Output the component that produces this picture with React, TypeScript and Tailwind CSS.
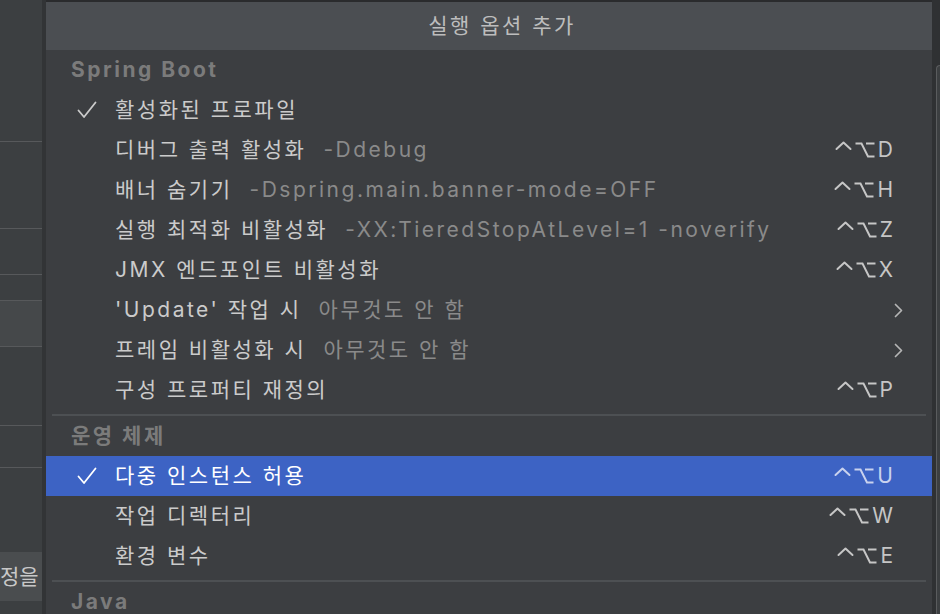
import React from "react";

type Item = {
  label: string;
  hint?: string;
  shortcut?: string;
  checked?: boolean;
  submenu?: boolean;
  selected?: boolean;
};

const springItems: Item[] = [
  { label: "활성화된 프로파일", checked: true },
  { label: "디버그 출력 활성화", hint: "-Ddebug", shortcut: "D" },
  { label: "배너 숨기기", hint: "-Dspring.main.banner-mode=OFF", shortcut: "H" },
  { label: "실행 최적화 비활성화", hint: "-XX:TieredStopAtLevel=1 -noverify", shortcut: "Z" },
  { label: "JMX 엔드포인트 비활성화", shortcut: "X" },
  { label: "'Update' 작업 시", hint: "아무것도 안 함", submenu: true },
  { label: "프레임 비활성화 시", hint: "아무것도 안 함", submenu: true },
  { label: "구성 프로퍼티 재정의", shortcut: "P" },
];

const osItems: Item[] = [
  { label: "다중 인스턴스 허용", checked: true, selected: true, shortcut: "U" },
  { label: "작업 디렉터리", shortcut: "W" },
  { label: "환경 변수", shortcut: "E" },
];

const Check = () => (
  <svg width="20" height="18" viewBox="0 0 20 18" fill="none">
    <path d="M1.5 9.5 L7 16 L18.5 1.5" stroke="currentColor" strokeWidth="1.8" strokeLinecap="round" strokeLinejoin="round" />
  </svg>
);

const Chevron = () => (
  <svg width="9" height="15" viewBox="0 0 9 15" fill="none">
    <path d="M1.5 1.5 L7.5 7.5 L1.5 13.5" stroke="currentColor" strokeWidth="1.7" strokeLinecap="round" strokeLinejoin="round" />
  </svg>
);

// control key caret, drawn larger than the font glyph
const Caret = () => (
  <svg width="17" height="20" viewBox="0 0 17 20" fill="none" className="mr-[3px]">
    <path d="M1.5 9 L8.5 2.5 L15.5 9" stroke="currentColor" strokeWidth="2" strokeLinecap="round" strokeLinejoin="round" />
  </svg>
);

// option key
const Option = () => (
  <svg width="20" height="20" viewBox="0 0 20 20" fill="none" className="mr-[3px]">
    <path d="M1.5 3.5 H6.5 L13 16.5 H18.5 M12 3.5 H18.5" stroke="currentColor" strokeWidth="2" strokeLinecap="square" />
  </svg>
);

function Row({ item }: { item: Item }) {
  return (
    <div
      className={`flex shrink-0 items-center h-[40px] ${
        item.selected ? "bg-[#3d63c4] text-white" : "text-[#cbcbcb]"
      }`}
    >
      <div className="w-[69px] flex justify-end pr-[18px]">
        {item.checked && <Check />}
      </div>
      <span className="whitespace-nowrap">{item.label}</span>
      {item.hint && (
        <span className="ml-[17px] whitespace-nowrap text-[#8a8a8a]">{item.hint}</span>
      )}
      <div className="ml-auto flex items-center">
        {item.shortcut && (
          <span
            className={`mr-[39px] flex items-center whitespace-nowrap tracking-normal ${
              item.selected ? "text-[#c9d2ee]" : "text-[#c6c6c6]"
            }`}
          >
            <Caret />
            <Option />
            {item.shortcut}
          </span>
        )}
        {item.submenu && (
          <span className="mr-[29px] text-[#b5b5b5]">
            <Chevron />
          </span>
        )}
      </div>
    </div>
  );
}

function SectionTitle({ title, h }: { title: string; h: string }) {
  return (
    <div className={`flex shrink-0 items-center pl-[25px] font-bold text-[#7b7b7b] ${h}`}>{title}</div>
  );
}

export default function App() {
  return (
    <div className="w-[940px] h-[614px] overflow-hidden flex bg-[#3c3f41] font-['Inter','Noto_Sans_CJK_KR',sans-serif] text-[21px] tracking-[2.5px]">
      {/* left window behind the popup */}
      <div className="w-[46px] shrink-0 flex flex-col bg-[#3c3f41] border-r-[4px] border-[#323436]">
        <div className="h-[142px] shrink-0 border-b border-[#57595b]" />
        <div className="h-[87px] shrink-0 border-b border-[#57595b]" />
        <div className="h-[46px] shrink-0 border-b border-[#57595b]" />
        <div className="h-[26px] shrink-0 border-b border-[#57595b]" />
        <div className="h-[46px] shrink-0 bg-[#45484a] border-b border-[#57595b]" />
        <div className="h-[79px] shrink-0 border-b border-[#57595b]" />
        <div className="h-[42px] shrink-0 border-b border-[#57595b]" />
        <div className="h-[84px] shrink-0" />
        <div className="h-[49px] shrink-0 bg-[#4a4d4f] flex items-center overflow-hidden">
          <span className="whitespace-nowrap text-[#c8c8c8] tracking-normal">정을</span>
        </div>
      </div>

      {/* popup */}
      <div className="flex-1 flex flex-col bg-[#3c3e41] border-t-2 border-[#2a2b2d]">
        <div className="h-[48px] shrink-0 bg-[#4b4e52] flex items-center justify-center pl-[26px] text-[#bdbdbd]">
          실행 옵션 추가
        </div>
        <SectionTitle title="Spring Boot" h="h-[40px]" />
        {springItems.map((it) => (
          <Row key={it.label} item={it} />
        ))}
        <div className="mt-[4px] mx-[6px] h-[2px] shrink-0 bg-[#4d5053]" />
        <SectionTitle title="운영 체제" h="h-[40px]" />
        {osItems.map((it) => (
          <Row key={it.label} item={it} />
        ))}
        <div className="mt-[4px] mx-[6px] h-[2px] shrink-0 bg-[#4d5053]" />
        <SectionTitle title="Java" h="h-[40px]" />
      </div>

      {/* right edge */}
      <div className="w-[8px] shrink-0 bg-[#2f3133] flex flex-col">
        <div className="h-[65px]" />
        <div className="flex-1 ml-[4px] rounded-tl-[4px] border-l border-t border-[#5a5c5e] bg-[#3c3f41]" />
      </div>
    </div>
  );
}
